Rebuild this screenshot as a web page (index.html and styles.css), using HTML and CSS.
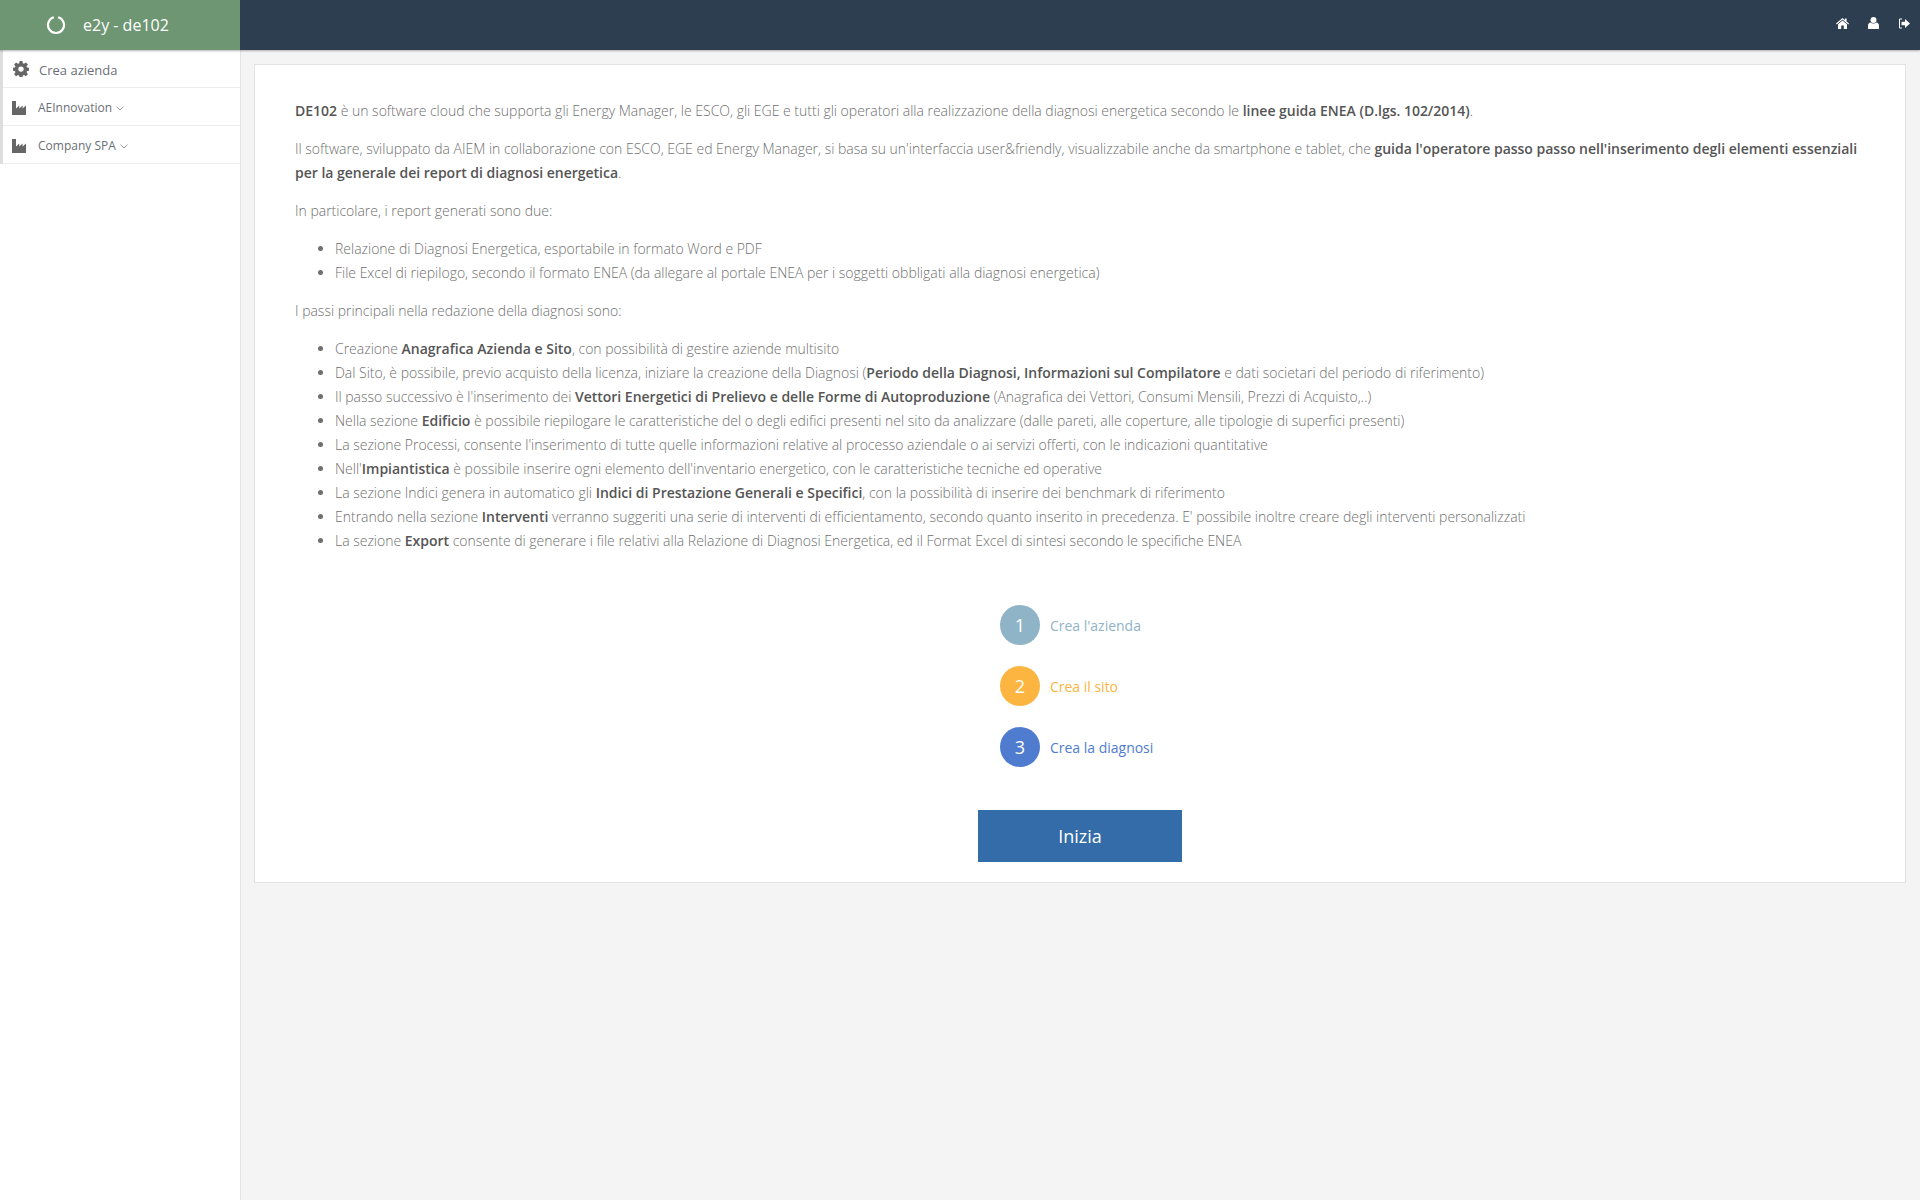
FILE: index.html
```html
<!DOCTYPE html>
<html lang="it">
<head>
  <meta charset="UTF-8">
  <title>e2y - de102</title>
  <link rel="stylesheet" href="styles.css">
</head>
<body>
  <header class="topbar">
    <div class="brand">
      <svg class="brand-ring" width="20" height="20" viewBox="0 0 20 20"><path d="M7.800 2.300A8 8 0 1 0 12.200 2.300" fill="none" stroke="#fff" stroke-width="2.200"/></svg>
      <span>e2y - de102</span>
    </div>
    <nav class="top-icons">
      <svg width="13" height="11" viewBox="0 0 13 11"><path d="M6.500 0 0 5.600l.7.800L6.500 1.500l5.800 4.900.7-.8L10.600 3.500V.6H9v1.500zM2 6.300V11h3.200V7.600h2.600V11H11V6.300L6.500 2.500z" fill="#fff"/></svg>
      <svg width="11" height="12" viewBox="0 0 11 12"><circle cx="5.500" cy="3" r="3" fill="#fff"/><path d="M0 12V8.500C0 6.800 1.200 5.800 2.600 5.600c.8.6 1.800 1 2.900 1s2.100-.4 2.900-1C9.800 5.800 11 6.800 11 8.500V12z" fill="#fff"/></svg>
      <svg width="12" height="11" viewBox="0 0 12 11"><path d="M4 1H1.500v9H4" fill="none" stroke="#fff" stroke-width="1"/><path d="M3.500 3.800h3.500V1l5 4.500-5 4.500V7.200H3.500z" fill="#fff"/></svg>
    </nav>
  </header>

  <div class="layout">
    <aside class="sidebar">
      <ul class="side-menu">
        <li>
          <svg class="side-icon" width="16" height="16" viewBox="0 0 16 16"><path fill-rule="evenodd" d="M6.600 0h2.800l.4 2.200 1.200.5L12.900 1.400l2 2-1.300 1.900.5 1.200 2.200.4v2.800l-2.200.4-.5 1.200 1.300 1.900-2 2-1.900-1.300-1.200.5-.4 2.200H6.600l-.4-2.200-1.200-.5-1.900 1.300-2-2 1.300-1.900-.5-1.200L-.3 9.700V6.900l2.200-.4.500-1.200L1.100 3.400l2-2 1.900 1.300 1.200-.5zM8 5.400a2.700 2.700 0 1 0 0 5.400 2.700 2.700 0 0 0 0-5.400z" fill="#666"/></svg>
          <span class="side-label">Crea azienda</span>
        </li>
        <li>
          <svg class="side-icon factory" width="14" height="14" viewBox="0 0 14 14"><path d="M0 0h4v7.500L7.300 4.500v3l3.300-3v3L14 4.500V14H0z" fill="#666"/></svg>
          <span class="side-label">AEInnovation</span>
          <svg class="caret" width="8" height="5" viewBox="0 0 8 5"><path d="M.5.700 4 4 7.500.700" fill="none" stroke="#999" stroke-width="1"/></svg>
        </li>
        <li>
          <svg class="side-icon factory" width="14" height="14" viewBox="0 0 14 14"><path d="M0 0h4v7.500L7.300 4.500v3l3.300-3v3L14 4.500V14H0z" fill="#666"/></svg>
          <span class="side-label">Company SPA</span>
          <svg class="caret" width="8" height="5" viewBox="0 0 8 5"><path d="M.5.700 4 4 7.500.700" fill="none" stroke="#999" stroke-width="1"/></svg>
        </li>
      </ul>
    </aside>

    <main class="content">
      <section class="card">
        <p><b>DE102</b> è un software cloud che supporta gli Energy Manager, le ESCO, gli EGE e tutti gli operatori alla realizzazione della diagnosi energetica secondo le <b>linee guida ENEA (D.lgs. 102/2014)</b>.</p>
        <p>Il software, sviluppato da AIEM in collaborazione con ESCO, EGE ed Energy Manager, si basa su un'interfaccia user&amp;friendly, visualizzabile anche da smartphone e tablet, che <b>guida l'operatore passo passo nell'inserimento degli elementi essenziali per la generale dei report di diagnosi energetica</b>.</p>
        <p>In particolare, i report generati sono due:</p>
        <ul>
          <li>Relazione di Diagnosi Energetica, esportabile in formato Word e PDF</li>
          <li>File Excel di riepilogo, secondo il formato ENEA (da allegare al portale ENEA per i soggetti obbligati alla diagnosi energetica)</li>
        </ul>
        <p>I passi principali nella redazione della diagnosi sono:</p>
        <ul>
          <li>Creazione <b>Anagrafica Azienda e Sito</b>, con possibilità di gestire aziende multisito</li>
          <li>Dal Sito, è possibile, previo acquisto della licenza, iniziare la creazione della Diagnosi (<b>Periodo della Diagnosi, Informazioni sul Compilatore</b> e dati societari del periodo di riferimento)</li>
          <li>Il passo successivo è l'inserimento dei <b>Vettori Energetici di Prelievo e delle Forme di Autoproduzione</b> (Anagrafica dei Vettori, Consumi Mensili, Prezzi di Acquisto,..)</li>
          <li>Nella sezione <b>Edificio</b> è possibile riepilogare le caratteristiche del o degli edifici presenti nel sito da analizzare (dalle pareti, alle coperture, alle tipologie di superfici presenti)</li>
          <li>La sezione Processi, consente l'inserimento di tutte quelle informazioni relative al processo aziendale o ai servizi offerti, con le indicazioni quantitative</li>
          <li>Nell'<b>Impiantistica</b> è possibile inserire ogni elemento dell'inventario energetico, con le caratteristiche tecniche ed operative</li>
          <li>La sezione Indici genera in automatico gli <b>Indici di Prestazione Generali e Specifici</b>, con la possibilità di inserire dei benchmark di riferimento</li>
          <li>Entrando nella sezione <b>Interventi</b> verranno suggeriti una serie di interventi di efficientamento, secondo quanto inserito in precedenza. E' possibile inoltre creare degli interventi personalizzati</li>
          <li>La sezione <b>Export</b> consente di generare i file relativi alla Relazione di Diagnosi Energetica, ed il Format Excel di sintesi secondo le specifiche ENEA</li>
        </ul>

        <div class="steps">
          <div class="step step-one"><span class="step-num">1</span><span class="step-text">Crea l'azienda</span></div>
          <div class="step step-two"><span class="step-num">2</span><span class="step-text">Crea il sito</span></div>
          <div class="step step-three"><span class="step-num">3</span><span class="step-text">Crea la diagnosi</span></div>
        </div>
        <div class="start">
          <a class="start-btn">Inizia</a>
        </div>
      </section>
    </main>
  </div>
</body>
</html>
```

FILE: styles.css
```css
* {
  box-sizing: border-box;
}

body {
  margin: 0;
  height: 1200px;
  overflow: hidden;
  background: #f4f4f4;
  font-family: "Open Sans", sans-serif;
  font-size: 14px;
  color: #6f6f6f;
}

.topbar {
  height: 50px;
  display: flex;
  justify-content: space-between;
  background: #2c3e50;
  box-shadow: 0 1px 2px rgba(0,0,0,.3);
  position: relative;
}

.brand {
  width: 240px;
  display: flex;
  align-items: center;
  padding-left: 46px;
  gap: 17px;
  background: #6e9672;
  color: #fff;
  font-size: 16px;
}

.top-icons {
  display: flex;
  align-items: center;
  gap: 19px;
  padding: 0 10px 4px 0;
}

.layout {
  display: flex;
  height: 1150px;
}

.sidebar {
  width: 241px;
  background: #fff;
  border-right: 1px solid #e4e4e4;
}

.side-menu {
  list-style: none;
  margin: 0;
  padding: 0;
  border-left: 3px solid #ddd;
}

.side-menu li {
  height: 38px;
  display: flex;
  align-items: center;
  padding: 2px 0 0 10px;
  border-bottom: 1px solid #eee;
  font-size: 12px;
  color: #6b6f75;
}

.side-icon {
  margin-right: 11px;
}

.side-icon.factory {
  margin: 0 12px 0 -1px;
}

.side-menu li:first-child .side-label {
  font-size: 13px;
}

.side-menu li:first-child .side-icon {
  margin: -2px 10px 0 0;
}

.caret {
  margin-left: 4px;
  margin-top: 2px;
}

.content {
  flex: 1;
  padding: 14px 14px 0 13px;
}

.card {
  height: 819px;
  padding: 34px 40px 0;
  background: #fff;
  border: 1px solid #e3e3e3;
  font-weight: 300;
  line-height: 24px;
  letter-spacing: -0.01px;
}

.card p {
  margin: 0 0 14px;
}

.card ul {
  margin: 0 0 14px;
  padding-left: 40px;
}

.card b {
  font-weight: 600;
  color: #555;
}

.steps {
  width: 240px;
  margin: 52px 0 0 705px;
  font-weight: 400;
}

.step {
  display: flex;
  align-items: center;
  gap: 10px;
  height: 40px;
  margin-bottom: 21px;
}

.step-text {
  padding-top: 2px;
}

.step-num {
  width: 40px;
  height: 40px;
  border-radius: 50%;
  display: flex;
  align-items: center;
  justify-content: center;
  color: #fff;
  font-size: 18px;
}

.step-one { color: #8fb3c7; }
.step-one .step-num { background: #8fb3c7; }
.step-two { color: #fbb540; }
.step-two .step-num { background: #fbb540; }
.step-three { color: #4f7ccf; }
.step-three .step-num { background: #4f7ccf; }

.start {
  display: flex;
  margin: 43px 0 0 683px;
}

.start-btn {
  width: 204px;
  height: 52px;
  display: flex;
  align-items: center;
  justify-content: center;
  background: #336ca9;
  color: #fff;
  font-size: 18px;
  font-weight: 400;
}
```
